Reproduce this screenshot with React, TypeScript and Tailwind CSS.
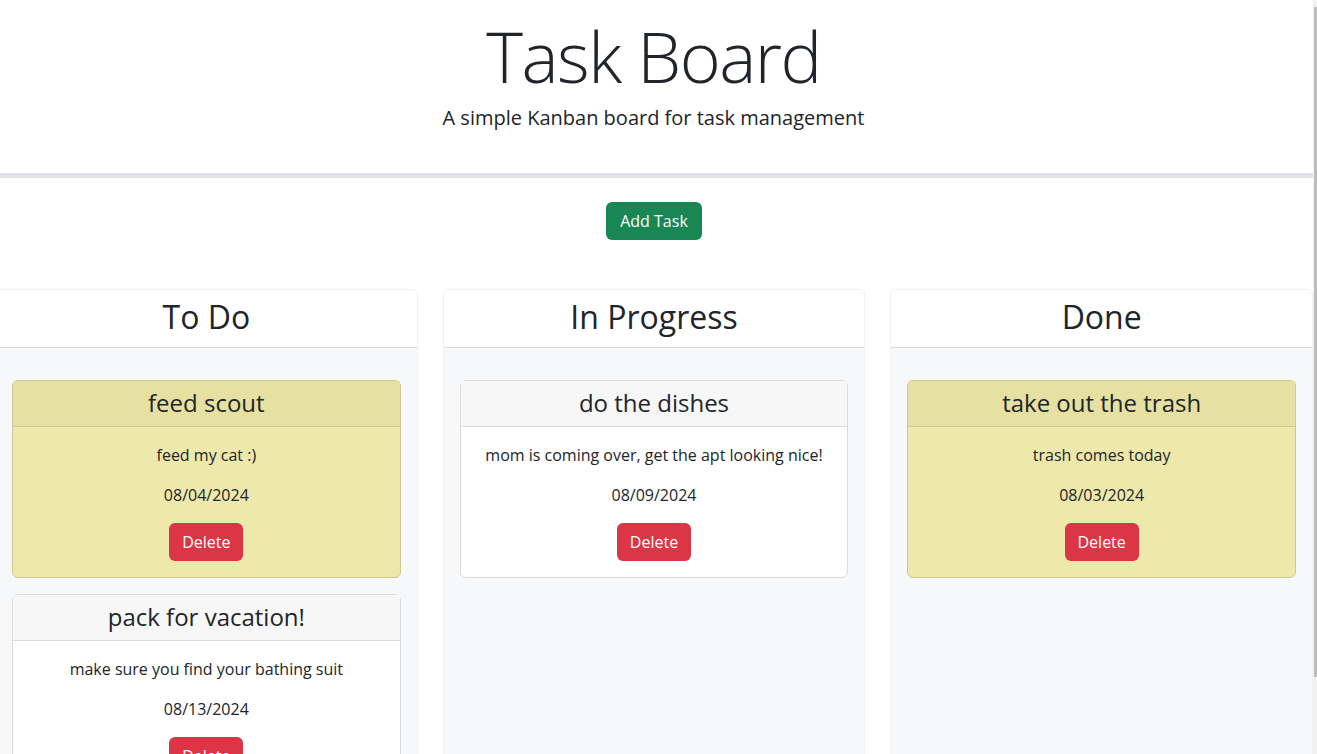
import React from 'react';

interface Task {
  id: number;
  title: string;
  description: string;
  dueDate: string;
  nearDue: boolean;
}

const columns: { name: string; tasks: Task[] }[] = [
  {
    name: 'To Do',
    tasks: [
      { id: 1, title: 'feed scout', description: 'feed my cat :)', dueDate: '08/04/2024', nearDue: true },
      { id: 2, title: 'pack for vacation!', description: 'make sure you find your bathing suit', dueDate: '08/13/2024', nearDue: false },
    ],
  },
  {
    name: 'In Progress',
    tasks: [
      { id: 3, title: 'do the dishes', description: 'mom is coming over, get the apt looking nice!', dueDate: '08/09/2024', nearDue: false },
    ],
  },
  {
    name: 'Done',
    tasks: [
      { id: 4, title: 'take out the trash', description: 'trash comes today', dueDate: '08/03/2024', nearDue: true },
    ],
  },
];

function TaskCard({ task }: { task: Task }) {
  return (
    <div
      className={`mb-4 rounded-md border text-center ${
        task.nearDue ? 'bg-[#eee8aa] border-[#cdc795]' : 'bg-white border-[#dcdcdc]'
      }`}
    >
      <div
        className={`py-2 border-b ${
          task.nearDue ? 'bg-[#e6e0a3] border-[#cdc795]' : 'bg-[#f7f7f7] border-[#dcdcdc]'
        }`}
      >
        <h4 className="text-[24px] leading-[1.2]">{task.title}</h4>
      </div>
      <div className="p-4">
        <p className="mb-4">{task.description}</p>
        <p className="mb-4">{task.dueDate}</p>
        <button className="px-[13px] h-[38px] bg-[#dc3545] text-white rounded-md">Delete</button>
      </div>
    </div>
  );
}

export default function App() {
  return (
    <div
      className="h-[754px] overflow-hidden flex text-[#212529] text-[16px] leading-[1.5]"
      style={{ fontFamily: '"Open Sans", "Noto Sans", sans-serif' }}
    >
      <div className="flex-1 min-w-0 bg-white">
        {/* Header */}
        <header className="text-center pt-[14px] pb-[40px] pr-[6px] border-b-[5px] border-[#dfe2e6]">
          <h1 className="text-[70px] leading-[1.2] font-light tracking-[-1.5px]">Task Board</h1>
          <p className="mt-[5px] text-[20px]">A simple Kanban board for task management</p>
        </header>

        {/* Add button */}
        <div className="flex justify-center pt-6 pr-[5px]">
          <button className="h-[38px] px-[14px] bg-[#198754] text-white rounded-md">Add Task</button>
        </div>

        {/* Lanes */}
        <div className="ml-[-5px] w-[1318px] grid grid-cols-3 gap-x-[25px] mt-[49px]">
          {columns.map((col) => (
            <div key={col.name} className="rounded-md border border-[#f1f1f1] overflow-hidden">
              <div className="h-[58px] pb-[3px] flex items-center justify-center bg-white border-b border-[#dcdcdc]">
                <h2 className="text-[32px] leading-[1.2]">{col.name}</h2>
              </div>
              <div className="bg-[#f7f8fa] px-4 pt-8 h-[500px]">
                {col.tasks.map((t) => (
                  <TaskCard key={t.id} task={t} />
                ))}
              </div>
            </div>
          ))}
        </div>
      </div>

      {/* Scrollbar */}
      <div className="w-[4px] bg-[#f1f1f1] flex justify-end">
        <div className="w-[3px] mt-[7px] h-[670px] bg-[#bdbdbd]" />
      </div>
    </div>
  );
}
